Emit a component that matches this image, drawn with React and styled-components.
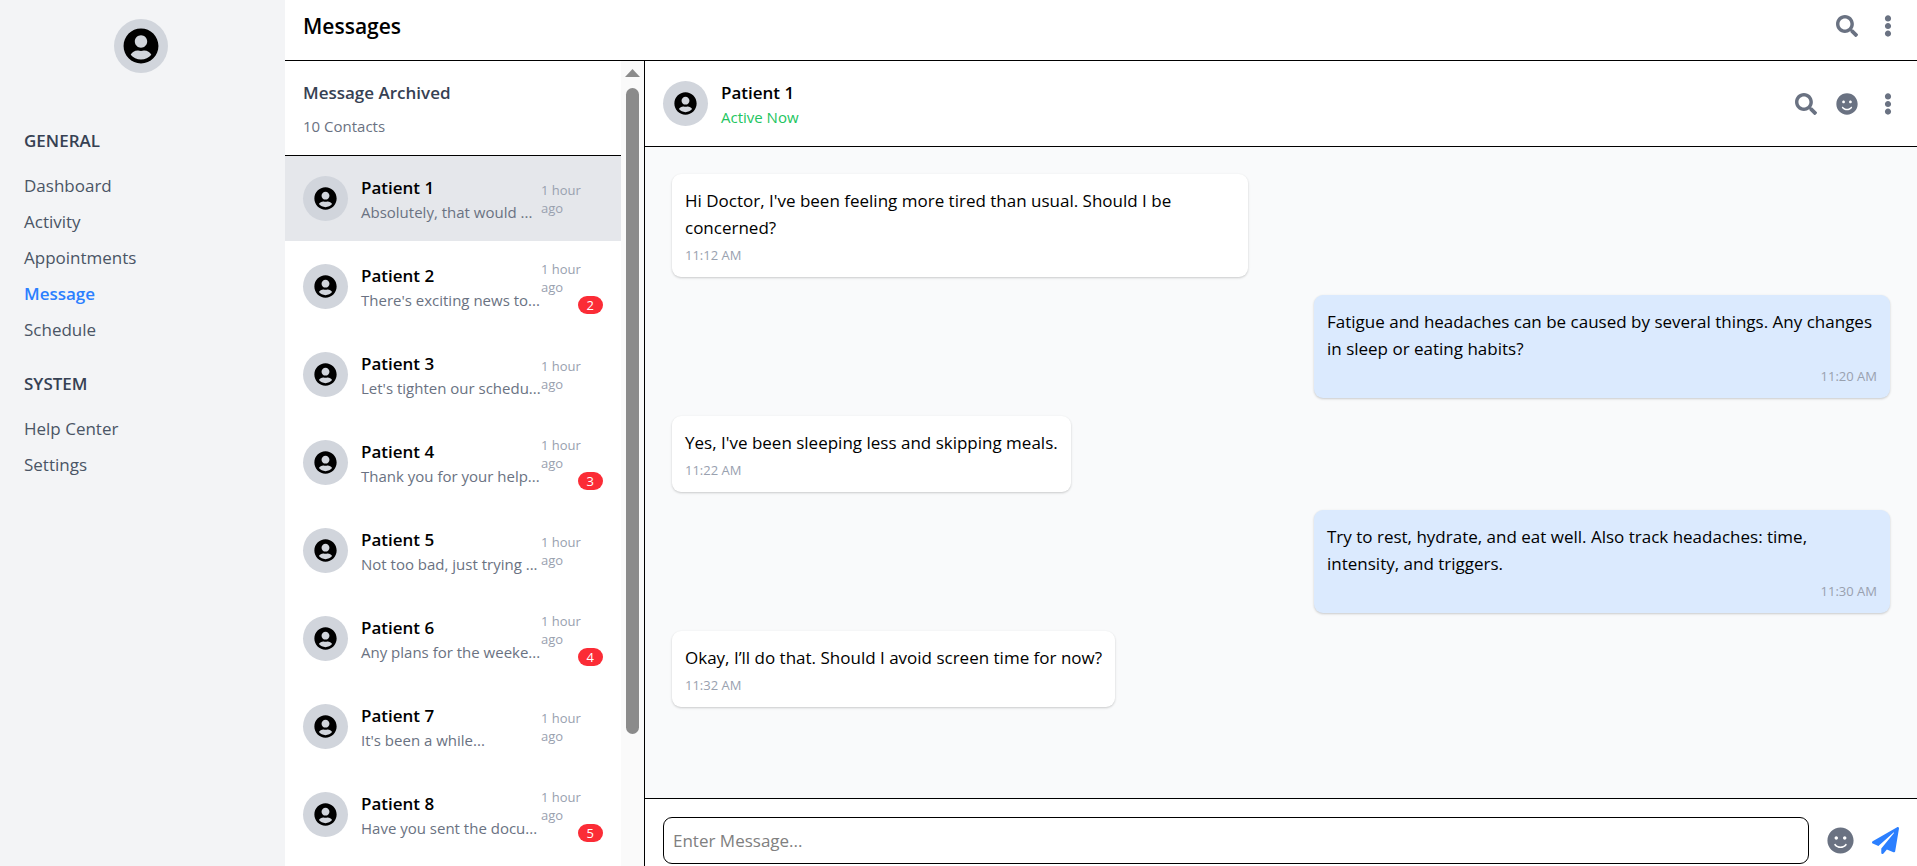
import React from 'react';
import styled, { createGlobalStyle } from 'styled-components';
import { FaSearch, FaSmile, FaEllipsisV, FaPaperPlane, FaUserCircle } from 'react-icons/fa';

const Global = createGlobalStyle`
  * { box-sizing: border-box; }
  html, body, #root { height: 100%; margin: 0; }
  body { font-family: "Open Sans", "Noto Sans", sans-serif; font-size: 17px; line-height: 27px; color: #000; background: #fff; overflow: hidden; }
  h1, h2, h3, p, ul { margin: 0; padding: 0; }
  ul { list-style: none; }
  button { border: 0; padding: 0; background: none; font: inherit; color: inherit; cursor: pointer; }
`;

const Shell = styled.div`
  display: flex;
  height: 100vh;
`;

const Sidebar = styled.nav`
  flex: none;
  width: 285px;
  padding: 19px 24px;
  background: #f3f4f6;
`;

const Avatar = styled.span`
  flex: none;
  display: flex;
  align-items: center;
  justify-content: center;
  width: ${(p) => p.$size}px;
  height: ${(p) => p.$size}px;
  border-radius: 50%;
  background: #d1d5dc;
`;

const Profile = styled.div`
  display: flex;
  justify-content: center;
  padding-right: 4px;
  margin-bottom: 54px;
`;

const NavTitle = styled.h2`
  margin-bottom: 18px;
  font-size: 17px;
  line-height: 27px;
  font-weight: 600;
  color: #364153;
`;

const NavList = styled.ul`
  display: grid;
  gap: 9px;
  margin-bottom: 27px;
`;

const NavLink = styled.a`
  display: block;
  text-decoration: none;
  font-weight: ${(p) => (p.$active ? 600 : 400)};
  color: ${(p) => (p.$active ? '#2b7fff' : '#4a5565')};
`;

const Main = styled.main`
  flex: 1;
  min-width: 0;
  display: flex;
  flex-direction: column;
`;

const TopBar = styled.header`
  flex: none;
  display: flex;
  align-items: center;
  justify-content: space-between;
  height: 61px;
  padding: 0 18px 9px;
  border-bottom: 1px solid #000;
`;

const PageTitle = styled.h1`
  font-size: 21px;
  line-height: 32px;
  font-weight: 600;
`;

const Tools = styled.div`
  display: flex;
  align-items: center;
  gap: 18px;
`;

const IconButton = styled.button`
  display: flex;
  align-items: center;
  justify-content: center;
  min-width: 23px;
  color: ${(p) => (p.$accent ? '#2b7fff' : '#6a7282')};
`;

const Body = styled.div`
  flex: 1;
  min-height: 0;
  display: flex;
`;

const Contacts = styled.section`
  flex: none;
  width: 360px;
  display: flex;
  border-right: 1px solid #000;
`;

const ContactColumn = styled.div`
  flex: 1;
  min-width: 0;
  overflow: hidden;
`;

const ContactsHead = styled.div`
  padding: 18px;
  border-bottom: 1px solid #000;
`;

const ContactsTitle = styled.h2`
  font-size: 17px;
  line-height: 27px;
  font-weight: 600;
  color: #364153;
`;

const ContactsCount = styled.p`
  margin-top: 9px;
  font-size: 15px;
  line-height: 22px;
  color: #6a7282;
`;

const ContactRow = styled.button`
  display: flex;
  align-items: center;
  width: 100%;
  height: 85px;
  margin-bottom: 3px;
  padding: 0 18px;
  text-align: left;
  background: ${(p) => (p.$active ? '#e5e7eb' : 'transparent')};
`;

const Person = styled.span`
  flex: none;
  display: flex;
  align-items: center;
  gap: 13px;
`;

const PersonText = styled.span`
  display: flex;
  flex-direction: column;
`;

const Name = styled.span`
  font-weight: 600;
`;

const Preview = styled.span`
  width: 180px;
  white-space: nowrap;
  font-size: 15px;
  line-height: 22px;
  color: #6a7282;
`;

const Meta = styled.span`
  flex: 1;
  display: flex;
  flex-direction: column;
  font-size: 13px;
  line-height: 18px;
  color: #99a1af;
`;

const Ago = styled.span`
  width: 48px;
`;

const Badge = styled.span`
  align-self: flex-end;
  padding: 0 9px;
  border-radius: 9px;
  background: #fb2c36;
  color: #fff;
`;

const ScrollTrack = styled.div`
  flex: none;
  display: flex;
  flex-direction: column;
  align-items: center;
  gap: 11px;
  width: 23px;
  padding-top: 8px;
  background: #fafafa;
`;

const ScrollThumb = styled.div`
  width: 13px;
  height: 81%;
  border-radius: 7px;
  background: #8b8b8b;
`;

const Chat = styled.section`
  flex: 1;
  min-width: 0;
  display: flex;
  flex-direction: column;
`;

const ChatHead = styled.header`
  flex: none;
  display: flex;
  align-items: center;
  justify-content: space-between;
  padding: 18px;
  border-bottom: 1px solid #000;
`;

const Status = styled.span`
  font-size: 15px;
  line-height: 22px;
  color: #22c55e;
`;

const Thread = styled.div`
  flex: 1;
  min-height: 0;
  display: flex;
  flex-direction: column;
  gap: 18px;
  padding: 27px;
  overflow: hidden;
  background: #f9fafb;
`;

const Bubble = styled.article`
  align-self: ${(p) => (p.$mine ? 'flex-end' : 'flex-start')};
  max-width: 576px;
  padding: 13px;
  border-radius: 9px;
  background: ${(p) => (p.$mine ? '#dbeafe' : '#fff')};
  box-shadow: 0 1px 3px rgba(0, 0, 0, 0.1), 0 1px 2px rgba(0, 0, 0, 0.1);
`;

const Time = styled.time`
  display: block;
  margin-top: 5px;
  font-size: 13px;
  line-height: 18px;
  text-align: ${(p) => (p.$mine ? 'right' : 'left')};
  color: #99a1af;
`;

const Composer = styled.form`
  flex: none;
  display: flex;
  align-items: center;
  gap: 18px;
  height: 68px;
  padding: 18px 18px 2px;
  border-top: 1px solid #000;
`;

const MessageInput = styled.input`
  flex: 1;
  min-width: 0;
  height: 47px;
  padding: 9px;
  border: 1px solid #000;
  border-radius: 9px;
  font: inherit;
  &::placeholder { color: #808080; opacity: 1; }
`;

const general = ['Dashboard', 'Activity', 'Appointments', 'Message', 'Schedule'];
const system = ['Help Center', 'Settings'];

const contacts = [
  { name: 'Patient 1', preview: 'Absolutely, that would ...' },
  { name: 'Patient 2', preview: "There's exciting news to...", unread: 2 },
  { name: 'Patient 3', preview: "Let's tighten our schedu..." },
  { name: 'Patient 4', preview: 'Thank you for your help...', unread: 3 },
  { name: 'Patient 5', preview: 'Not too bad, just trying ...' },
  { name: 'Patient 6', preview: 'Any plans for the weeke...', unread: 4 },
  { name: 'Patient 7', preview: "It's been a while..." },
  { name: 'Patient 8', preview: 'Have you sent the docu...', unread: 5 },
];

const messages = [
  { text: "Hi Doctor, I've been feeling more tired than usual. Should I be concerned?", time: '11:12 AM' },
  { text: 'Fatigue and headaches can be caused by several things. Any changes in sleep or eating habits?', time: '11:20 AM', mine: true },
  { text: "Yes, I've been sleeping less and skipping meals.", time: '11:22 AM' },
  { text: 'Try to rest, hydrate, and eat well. Also track headaches: time, intensity, and triggers.', time: '11:30 AM', mine: true },
  { text: 'Okay, I’ll do that. Should I avoid screen time for now?', time: '11:32 AM' },
];

function NavGroup({ title, items }) {
  return (
    <>
      <NavTitle>{title}</NavTitle>
      <NavList>
        {items.map((item) => (
          <li key={item}>
            <NavLink href="#" $active={item === 'Message'}>{item}</NavLink>
          </li>
        ))}
      </NavList>
    </>
  );
}

export default function App() {
  return (
    <>
      <Global />
      <Shell>
        <Sidebar>
          <Profile>
            <Avatar $size={54}><FaUserCircle size={36} /></Avatar>
          </Profile>
          <NavGroup title="GENERAL" items={general} />
          <NavGroup title="SYSTEM" items={system} />
        </Sidebar>
        <Main>
          <TopBar>
            <PageTitle>Messages</PageTitle>
            <Tools>
              <IconButton aria-label="Search"><FaSearch size={22} /></IconButton>
              <IconButton aria-label="More"><FaEllipsisV size={22} /></IconButton>
            </Tools>
          </TopBar>
          <Body>
            <Contacts>
              <ContactColumn>
                <ContactsHead>
                  <ContactsTitle>Message Archived</ContactsTitle>
                  <ContactsCount>10 Contacts</ContactsCount>
                </ContactsHead>
                {contacts.map(({ name, preview, unread }, i) => (
                  <ContactRow key={name} $active={i === 0}>
                    <Person>
                      <Avatar $size={45}><FaUserCircle size={23} /></Avatar>
                      <PersonText>
                        <Name>{name}</Name>
                        <Preview>{preview}</Preview>
                      </PersonText>
                    </Person>
                    <Meta>
                      <Ago>1 hour ago</Ago>
                      {unread && <Badge>{unread}</Badge>}
                    </Meta>
                  </ContactRow>
                ))}
              </ContactColumn>
              <ScrollTrack>
                <svg width="15" height="8" viewBox="0 0 15 8" aria-hidden="true"><path d="M7.5 0L15 8H0z" fill="#8b8b8b" /></svg>
                <ScrollThumb />
              </ScrollTrack>
            </Contacts>
            <Chat>
              <ChatHead>
                <Person>
                  <Avatar $size={45}><FaUserCircle size={23} /></Avatar>
                  <PersonText>
                    <Name>Patient 1</Name>
                    <Status>Active Now</Status>
                  </PersonText>
                </Person>
                <Tools>
                  <IconButton aria-label="Search chat"><FaSearch size={22} /></IconButton>
                  <IconButton aria-label="Emoji"><FaSmile size={22} /></IconButton>
                  <IconButton aria-label="More"><FaEllipsisV size={22} /></IconButton>
                </Tools>
              </ChatHead>
              <Thread>
                {messages.map((m) => (
                  <Bubble key={m.time} $mine={m.mine}>
                    <p>{m.text}</p>
                    <Time $mine={m.mine}>{m.time}</Time>
                  </Bubble>
                ))}
              </Thread>
              <Composer>
                <MessageInput aria-label="Message" placeholder="Enter Message..." />
                <IconButton type="button" aria-label="Emoji"><FaSmile size={27} /></IconButton>
                <IconButton type="button" aria-label="Send" $accent><FaPaperPlane size={27} /></IconButton>
              </Composer>
            </Chat>
          </Body>
        </Main>
      </Shell>
    </>
  );
}
